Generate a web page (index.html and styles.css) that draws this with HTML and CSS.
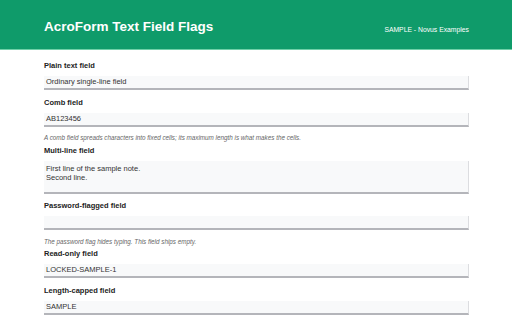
FILE: index.html
```html
<!DOCTYPE html>
<html>
<head>
<meta charset="UTF-8">
<title>AcroForm Text Field Flags</title>
<link rel="stylesheet" href="styles.css">
</head>
<body>
  <div id="header">
    <h1>AcroForm Text Field Flags</h1>
    <div class="brand">SAMPLE - Novus Examples</div>
  </div>

  <div id="main">
    <div class="field">
      <label>Plain text field</label>
      <div class="input">Ordinary single-line field</div>
    </div>

    <div class="field">
      <label>Comb field</label>
      <div class="input">AB123456</div>
    </div>
    <div class="help">A comb field spreads characters into fixed cells; its maximum length is what makes the cells.</div>

    <div class="field">
      <label>Multi-line field</label>
      <div class="input multi">First line of the sample note.<br>Second line.</div>
    </div>

    <div class="field">
      <label>Password-flagged field</label>
      <div class="input"></div>
    </div>
    <div class="help">The password flag hides typing. This field ships empty.</div>

    <div class="field">
      <label>Read-only field</label>
      <div class="input">LOCKED-SAMPLE-1</div>
    </div>

    <div class="field">
      <label>Length-capped field</label>
      <div class="input">SAMPLE</div>
    </div>
  </div>
</body>
</html>
```

FILE: styles.css
```css
* {
  margin: 0;
  padding: 0;
  box-sizing: border-box;
}

body {
  background: #fff;
  color: #222;
  font-family: 'Liberation Sans', Arial, sans-serif;
}

#header {
  height: 50px;
  background: #0f9b6a;
  border-bottom: 1px solid #6fd0a8;
  display: flex;
  justify-content: space-between;
  align-items: center;
  padding: 4px 43px 0 44px;
  color: #fff;
}

#header h1 {
  font-size: 13.5px;
  font-weight: bold;
}

#header .brand {
  font-size: 6.8px;
  padding-top: 6px;
}

#main {
  padding: 10px 43px 0 44px;
}

.field {
  margin-bottom: 6.5px;
}

.field label {
  display: block;
  font-size: 7.5px;
  font-weight: bold;
  line-height: 11px;
  margin-bottom: 5px;
  color: #222;
}

.input {
  height: 14px;
  background: #f8f9fa;
  border-right: 1px solid #dcdde0;
  border-bottom: 2px solid #b4b5ba;
  font-size: 7.5px;
  line-height: 12px;
  padding: 0 2px;
  color: #333;
}

.input.multi {
  height: 33px;
  padding-top: 3px;
  line-height: 9.5px;
}

.help {
  font-size: 6.3px;
  font-style: italic;
  color: #666;
  line-height: 10px;
  margin: 0.5px 0 1.5px;
}
```
